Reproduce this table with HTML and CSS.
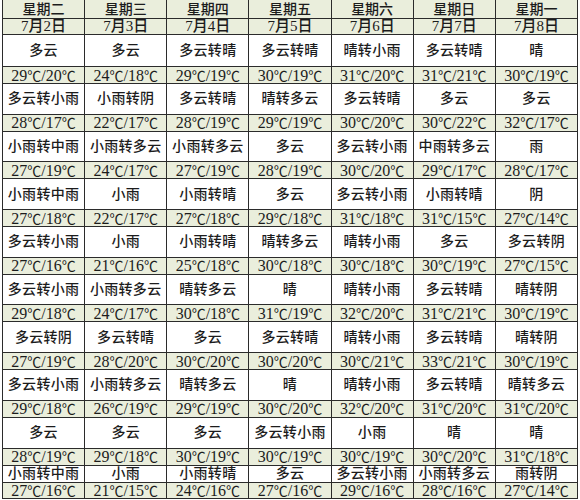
FILE: index.html
```html
<!DOCTYPE html>
<html lang="zh-CN">
<head>
<meta charset="utf-8">
<title>一周天气预报</title>
<link rel="stylesheet" href="styles.css">
</head>
<body>
<table class="forecast">
  <colgroup>
    <col class="col"><col class="col"><col class="col"><col class="col"><col class="col"><col class="col"><col class="col">
  </colgroup>
  <tbody>
    <tr class="day green"><td>星期二</td><td>星期三</td><td>星期四</td><td>星期五</td><td>星期六</td><td>星期日</td><td>星期一</td></tr>
    <tr class="date green"><td>7月2日</td><td>7月3日</td><td>7月4日</td><td>7月5日</td><td>7月6日</td><td>7月7日</td><td>7月8日</td></tr>

    <tr class="wx first"><td>多云</td><td>多云</td><td>多云转晴</td><td>多云转晴</td><td>晴转小雨</td><td>多云转晴</td><td>晴</td></tr>
    <tr class="tp green"><td>29<span class="c">℃</span>/20<span class="c">℃</span></td><td>24<span class="c">℃</span>/18<span class="c">℃</span></td><td>29<span class="c">℃</span>/19<span class="c">℃</span></td><td>30<span class="c">℃</span>/19<span class="c">℃</span></td><td>31<span class="c">℃</span>/20<span class="c">℃</span></td><td>31<span class="c">℃</span>/21<span class="c">℃</span></td><td>30<span class="c">℃</span>/19<span class="c">℃</span></td></tr>

    <tr class="wx"><td>多云转小雨</td><td>小雨转阴</td><td>多云转晴</td><td>晴转多云</td><td>多云转晴</td><td>多云</td><td>多云</td></tr>
    <tr class="tp green"><td>28<span class="c">℃</span>/17<span class="c">℃</span></td><td>22<span class="c">℃</span>/17<span class="c">℃</span></td><td>28<span class="c">℃</span>/19<span class="c">℃</span></td><td>29<span class="c">℃</span>/19<span class="c">℃</span></td><td>30<span class="c">℃</span>/20<span class="c">℃</span></td><td>30<span class="c">℃</span>/22<span class="c">℃</span></td><td>32<span class="c">℃</span>/17<span class="c">℃</span></td></tr>

    <tr class="wx"><td>小雨转中雨</td><td>小雨转多云</td><td>小雨转多云</td><td>多云</td><td>多云转小雨</td><td>中雨转多云</td><td>雨</td></tr>
    <tr class="tp green"><td>27<span class="c">℃</span>/19<span class="c">℃</span></td><td>24<span class="c">℃</span>/17<span class="c">℃</span></td><td>27<span class="c">℃</span>/19<span class="c">℃</span></td><td>28<span class="c">℃</span>/19<span class="c">℃</span></td><td>30<span class="c">℃</span>/20<span class="c">℃</span></td><td>29<span class="c">℃</span>/17<span class="c">℃</span></td><td>28<span class="c">℃</span>/17<span class="c">℃</span></td></tr>

    <tr class="wx"><td>小雨转中雨</td><td>小雨</td><td>小雨转晴</td><td>多云</td><td>多云转小雨</td><td>小雨转晴</td><td>阴</td></tr>
    <tr class="tp green"><td>27<span class="c">℃</span>/18<span class="c">℃</span></td><td>22<span class="c">℃</span>/17<span class="c">℃</span></td><td>27<span class="c">℃</span>/18<span class="c">℃</span></td><td>29<span class="c">℃</span>/18<span class="c">℃</span></td><td>31<span class="c">℃</span>/18<span class="c">℃</span></td><td>31<span class="c">℃</span>/15<span class="c">℃</span></td><td>27<span class="c">℃</span>/14<span class="c">℃</span></td></tr>

    <tr class="wx"><td>多云转小雨</td><td>小雨</td><td>小雨转晴</td><td>晴转多云</td><td>晴转小雨</td><td>多云</td><td>多云转阴</td></tr>
    <tr class="tp green"><td>27<span class="c">℃</span>/16<span class="c">℃</span></td><td>21<span class="c">℃</span>/16<span class="c">℃</span></td><td>25<span class="c">℃</span>/18<span class="c">℃</span></td><td>30<span class="c">℃</span>/18<span class="c">℃</span></td><td>30<span class="c">℃</span>/18<span class="c">℃</span></td><td>30<span class="c">℃</span>/19<span class="c">℃</span></td><td>27<span class="c">℃</span>/15<span class="c">℃</span></td></tr>

    <tr class="wx"><td>多云转小雨</td><td>小雨转多云</td><td>晴转多云</td><td>晴</td><td>晴转小雨</td><td>多云转晴</td><td>晴转阴</td></tr>
    <tr class="tp green"><td>29<span class="c">℃</span>/18<span class="c">℃</span></td><td>24<span class="c">℃</span>/17<span class="c">℃</span></td><td>30<span class="c">℃</span>/18<span class="c">℃</span></td><td>31<span class="c">℃</span>/19<span class="c">℃</span></td><td>32<span class="c">℃</span>/20<span class="c">℃</span></td><td>31<span class="c">℃</span>/21<span class="c">℃</span></td><td>30<span class="c">℃</span>/19<span class="c">℃</span></td></tr>

    <tr class="wx"><td>多云转阴</td><td>多云转晴</td><td>多云</td><td>多云转晴</td><td>晴转小雨</td><td>多云转晴</td><td>晴转阴</td></tr>
    <tr class="tp green"><td>27<span class="c">℃</span>/19<span class="c">℃</span></td><td>28<span class="c">℃</span>/20<span class="c">℃</span></td><td>30<span class="c">℃</span>/20<span class="c">℃</span></td><td>30<span class="c">℃</span>/20<span class="c">℃</span></td><td>30<span class="c">℃</span>/21<span class="c">℃</span></td><td>33<span class="c">℃</span>/21<span class="c">℃</span></td><td>30<span class="c">℃</span>/19<span class="c">℃</span></td></tr>

    <tr class="wx"><td>多云转小雨</td><td>小雨转多云</td><td>晴转多云</td><td>晴</td><td>晴转小雨</td><td>多云转晴</td><td>晴转多云</td></tr>
    <tr class="tp green"><td>29<span class="c">℃</span>/18<span class="c">℃</span></td><td>26<span class="c">℃</span>/19<span class="c">℃</span></td><td>29<span class="c">℃</span>/19<span class="c">℃</span></td><td>30<span class="c">℃</span>/20<span class="c">℃</span></td><td>32<span class="c">℃</span>/20<span class="c">℃</span></td><td>31<span class="c">℃</span>/20<span class="c">℃</span></td><td>31<span class="c">℃</span>/20<span class="c">℃</span></td></tr>

    <tr class="wx"><td>多云</td><td>多云</td><td>多云</td><td>多云转小雨</td><td>小雨</td><td>晴</td><td>晴</td></tr>
    <tr class="tp green"><td>28<span class="c">℃</span>/19<span class="c">℃</span></td><td>29<span class="c">℃</span>/18<span class="c">℃</span></td><td>30<span class="c">℃</span>/19<span class="c">℃</span></td><td>30<span class="c">℃</span>/19<span class="c">℃</span></td><td>30<span class="c">℃</span>/19<span class="c">℃</span></td><td>30<span class="c">℃</span>/20<span class="c">℃</span></td><td>31<span class="c">℃</span>/18<span class="c">℃</span></td></tr>

    <tr class="wx last"><td>小雨转中雨</td><td>小雨</td><td>小雨转晴</td><td>多云</td><td>多云转小雨</td><td>小雨转多云</td><td>雨转阴</td></tr>
    <tr class="tp green lastrow"><td>27<span class="c">℃</span>/16<span class="c">℃</span></td><td>21<span class="c">℃</span>/15<span class="c">℃</span></td><td>24<span class="c">℃</span>/16<span class="c">℃</span></td><td>27<span class="c">℃</span>/16<span class="c">℃</span></td><td>29<span class="c">℃</span>/16<span class="c">℃</span></td><td>28<span class="c">℃</span>/16<span class="c">℃</span></td><td>27<span class="c">℃</span>/14<span class="c">℃</span></td></tr>
  </tbody>
</table>
</body>
</html>
```

FILE: styles.css
```css
html, body {
  margin: 0;
  padding: 0;
  background: #ffffff;
}

.forecast {
  margin: 0 0 0 2px;
  width: 576px;
  table-layout: fixed;
  border-collapse: collapse;
  font-family: "Liberation Serif", "Noto Sans CJK SC", serif;
  color: #1c1c1c;
}

.forecast td {
  border: 1px solid #2b2b2b;
  padding: 0;
  text-align: center;
  vertical-align: middle;
  line-height: 15px;
  white-space: nowrap;
}

.forecast tr:first-child td {
  border-top: none;
}

.green td {
  background: #eaeedc;
}

.day td {
  height: 17px;
  font-size: 14px;
  font-weight: 500;
  padding-top: 1px;
}

.date td {
  height: 15px;
  font-size: 15px;
  font-weight: 500;
}

.wx td {
  height: 29.7px;
  font-size: 14px;
  font-weight: 500;
  letter-spacing: 0.3px;
}

.wx.first td {
  height: 31px;
}

.wx.last td {
  height: 16px;
}

.tp td {
  height: 16px;
  font-size: 16px;
}

.tp.lastrow td {
  height: 15px;
  line-height: 14px;
}

.c {
  font-family: "Noto Sans CJK SC", sans-serif;
  font-size: 14px;
  font-weight: 400;
  line-height: 14px;
}
```
